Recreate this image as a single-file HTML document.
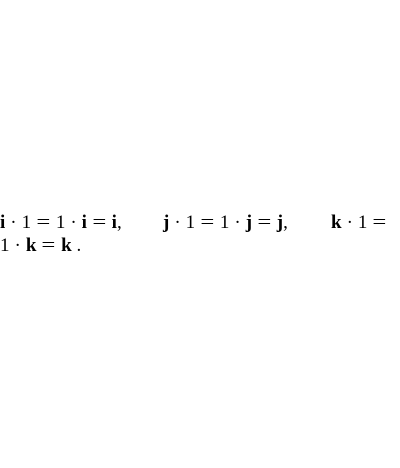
<!DOCTYPE html>
<html><head><style>
html,body{margin:0;padding:0;background:#fff;width:400px;height:468px;overflow:hidden}
.t{position:absolute;font-family:"Liberation Serif",serif;font-size:19px;color:#000;white-space:nowrap;line-height:1}
b{font-weight:bold}
.o{display:inline-block;margin:0 5px}
.e{display:inline-block;margin:0 7px;transform:scaleX(1.3)}
</style></head><body>
<div class="t" style="left:0;top:213px"><b>i</b><span class="o">·</span>1<span class="e">=</span>1<span class="o">·</span><b>i</b><span class="e">=</span><b>i</b>,</div>
<div class="t" style="left:163px;top:213px"><b>j</b><span class="o">·</span>1<span class="e">=</span>1<span class="o">·</span><b>j</b><span class="e">=</span><b>j</b>,</div>
<div class="t" style="left:331px;top:213px"><b>k</b><span class="o">·</span>1<span class="e">=</span></div>
<div class="t" style="left:0;top:236px">1<span class="o">·</span><b>k</b><span class="e">=</span><b>k</b> .</div>
</body></html>
